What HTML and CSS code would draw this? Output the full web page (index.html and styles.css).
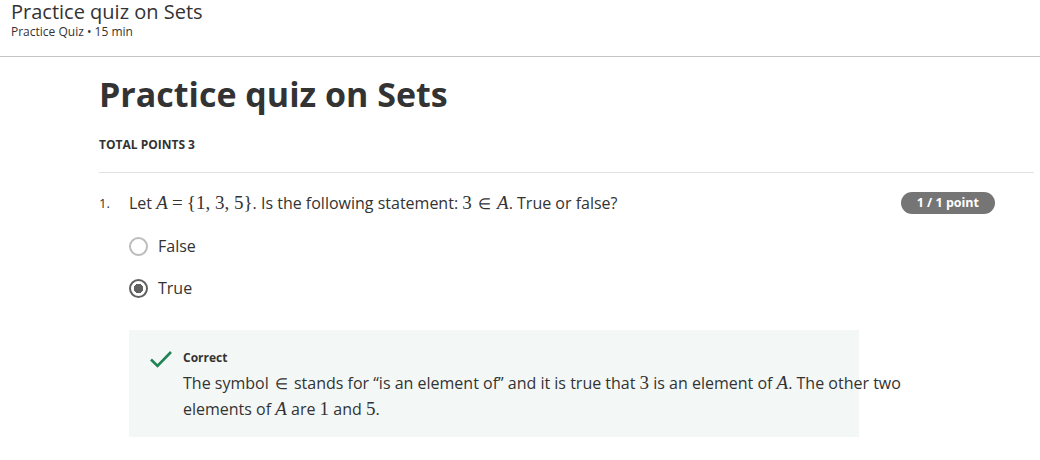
FILE: index.html
```html
<!DOCTYPE html>
<html>
<head>
<meta charset="utf-8">
<link rel="stylesheet" href="styles.css">
</head>
<body>
<header class="topbar">
  <div class="top-title">Practice quiz on Sets</div>
  <div class="top-sub">Practice Quiz • 15 min</div>
</header>
<main class="content">
  <h1 class="quiz-title">Practice quiz on Sets</h1>
  <div class="total">TOTAL POINTS 3</div>
  <div class="divider"></div>
  <section class="question">
    <div class="q-row">
      <span class="q-num">1.</span>
      <span class="q-text">Let <span class="m mi">A</span> <span class="m">=</span> <span class="m">{1, 3, 5}</span>. Is the following statement: <span class="m">3</span> <span class="m el">∈</span> <span class="m mi">A</span>. True or false?</span>
      <span class="badge">1 / 1 point</span>
    </div>
    <div class="options">
      <div class="opt"><span class="radio"></span><span>False</span></div>
      <div class="opt"><span class="radio checked"></span><span>True</span></div>
    </div>
    <div class="feedback">
      <svg class="check" width="24" height="18" viewBox="0 0 24 18"><path d="M2 9.5 L8.5 16 L22 2" fill="none" stroke="#1f8354" stroke-width="2.6"/></svg>
      <div class="fb-body">
        <div class="fb-title">Correct</div>
        <div class="fb-text">The symbol <span class="m el">∈</span> stands for “is an element of” and it is true that <span class="m">3</span> is an element of <span class="m mi">A</span>. The other two elements of <span class="m mi">A</span> are <span class="m">1</span> and <span class="m">5</span>.</div>
      </div>
    </div>
  </section>
</main>
</body>
</html>
```

FILE: styles.css
```css
* { box-sizing: border-box; }
body {
  margin: 0;
  font-family: "Open Sans", "Noto Sans", sans-serif;
  color: #333;
  background: #fff;
}
.topbar {
  padding: 0 0 0 11px;
  height: 57px;
  border-bottom: 1px solid #c4c4c4;
}
.top-title {
  font-size: 20px;
  line-height: 24px;
  color: #333;
}
.top-sub {
  font-size: 12px;
  line-height: 16px;
  color: #333;
}
.content {
  margin: 0 6px 0 99px;
}
.quiz-title {
  margin: 0;
  padding-top: 16px;
  font-size: 34px;
  line-height: 42px;
  font-weight: 700;
  color: #333;
}
.total {
  margin-top: 22px;
  font-size: 12px;
  font-weight: 700;
  line-height: 16px;
  color: #333;
}
.divider {
  margin-top: 19px;
  height: 1px;
  background: #e1e1e1;
}
.question {
  padding-top: 18px;
}
.q-row {
  display: flex;
  align-items: center;
  height: 24px;
}
.q-num {
  width: 30px;
  font-size: 13px;
}
.q-text {
  font-size: 16px;
  flex: 1;
}
.m {
  font-family: "Liberation Serif", "DejaVu Serif", serif;
  font-size: 19px;
  line-height: 1;
}
.m.el {
  font-family: "DejaVu Sans", sans-serif;
  font-size: 15px;
  font-weight: 300;
  margin: 0 2px;
}
.mi { font-style: italic; }
.badge {
  margin-right: 39px;
  background: #757575;
  color: #fff;
  font-size: 12.5px;
  font-weight: 700;
  border-radius: 11px;
  height: 22px;
  line-height: 22px;
  padding: 0 16px;
}
.options {
  margin-left: 30px;
  padding-top: 21px;
  display: flex;
  flex-direction: column;
  gap: 22px;
}
.opt {
  display: flex;
  align-items: center;
  gap: 10px;
  font-size: 16px;
  height: 20px;
}
.radio {
  width: 19px;
  height: 19px;
  border-radius: 50%;
  border: 2px solid #bdbdbd;
  background: #fff;
}
.radio.checked {
  border-color: #616161;
  background: radial-gradient(circle, #616161 0 4.5px, #fff 5px);
}
.feedback {
  margin: 32px 0 0 30px;
  width: 730px;
  height: 107px;
  background: #f3f8f7;
  display: flex;
  padding: 18px 0 0 20px;
  gap: 10px;
}
.check { margin-top: 2px; flex: none; }
.fb-body {
  flex: none;
  width: 730px;
}
.fb-title {
  font-size: 12px;
  font-weight: 700;
  line-height: 20px;
}
.fb-text {
  margin-top: 2px;
  width: 725px;
  font-size: 16px;
  line-height: 26px;
}
```
